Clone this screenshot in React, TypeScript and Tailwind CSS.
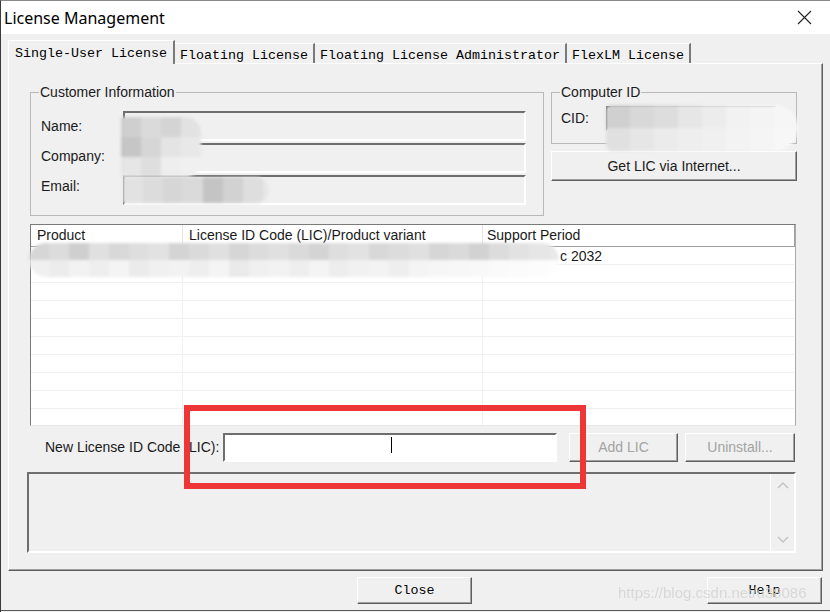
import React from 'react';

const ui = "font-['Liberation_Sans',Arial,sans-serif] text-[14px] text-[#1a1a1a]";
const mono = "font-['Liberation_Mono','Courier_New',monospace] text-[13.33px] text-black";
const sunken = 'border-2 border-t-[#6e6e6e] border-l-[#6e6e6e] border-r-white border-b-white';
const raised = 'border border-t-white border-l-white border-r-[#5f5f5f] border-b-[#5f5f5f] shadow-[inset_-1px_-1px_0_#a0a0a0]';

function Tab({ label, active }: { label: string; active?: boolean }) {
  if (active) {
    return (
      <div className={`h-[24px] -mb-px px-[6px] pt-[3px] border-l border-t border-white border-r-2 border-r-[#7a7a7a] bg-[#f0f0f0] ${mono}`}>
        {label}
      </div>
    );
  }
  return (
    <div className={`h-[20px] px-[5px] pt-[2px] border-r-2 border-r-[#7a7a7a] border-t border-t-white ${mono}`}>
      {label}
    </div>
  );
}

function Btn({ label, w, h, disabled, monoFont }: { label: string; w: string; h: string; disabled?: boolean; monoFont?: boolean }) {
  return (
    <div className={`${w} ${h} ${raised} flex items-center justify-center bg-[#f0f0f0] ${monoFont ? mono : ui} ${disabled ? 'text-[#a3a3a3]' : ''}`}>
      {label}
    </div>
  );
}

// pixelated blur patches over the private data
function Mosaic({ cls, cells, cellW, rows }: { cls: string; cells: string[]; cellW: number; rows: number }) {
  const cols = Math.ceil(cells.length / rows);
  return (
    <div className={`absolute overflow-hidden blur-[1.5px] grid ${cls}`}
      style={{ gridTemplateColumns: `repeat(${cols}, ${cellW}px)` }}>
      {cells.map((c, i) => <div key={i} style={{ backgroundColor: c }} />)}
    </div>
  );
}

export default function App() {
  const rows = Array.from({ length: 10 });
  return (
    <div className={`relative w-[830px] h-[612px] overflow-hidden bg-[#f0f0f0] border-l border-t border-l-[#3a3a3a] border-t-[#8a8a8a] flex flex-col ${ui}`}>
      {/* title bar */}
      <div className="h-[33px] bg-white flex items-center justify-between pl-[3px] pr-[18px]">
        <span className="font-['Noto_Sans',sans-serif] text-[16px] text-black">License Management</span>
        <svg width="15" height="15" viewBox="0 0 15 15">
          <path d="M1 1 L14 14 M14 1 L1 14" stroke="#222" strokeWidth="1.1" />
        </svg>
      </div>

      {/* tabs */}
      <div className="mt-[6px] h-[23px] pl-[7px] flex items-end relative z-10">
        <Tab label="Single-User License" active />
        <Tab label="Floating License" />
        <Tab label="Floating License Administrator" />
        <Tab label="FlexLM License" />
      </div>

      {/* tab page */}
      <div className={`ml-[7px] w-[815px] h-[508px] shrink-0 ${raised} pt-[21px] pl-[21px] flex flex-col`}>
        <div className="flex gap-[7px]">
          <fieldset className="w-[514px] h-[131px] border border-[#b9b9b9]">
            <legend className="ml-[8px] px-[1px] leading-[15px]">Customer Information</legend>
            <div className="flex">
              <div className="w-[92px] pl-[10px] mt-[18px] flex flex-col gap-[14px] leading-[16px]">
                <span>Name:</span>
                <span>Company:</span>
                <span>Email:</span>
              </div>
              <div className="mt-[11px] flex flex-col gap-[2px]">
                <div className={`w-[403px] h-[30px] ${sunken}`} />
                <div className={`w-[403px] h-[30px] ${sunken}`} />
                <div className={`w-[403px] h-[30px] ${sunken}`} />
              </div>
            </div>
          </fieldset>

          <div className="flex flex-col">
            <fieldset className="w-[246px] h-[59px] border border-[#b9b9b9]">
              <legend className="ml-[8px] px-[1px] leading-[15px]">Computer ID</legend>
              <div className="flex items-center mt-[6px]">
                <span className="w-[54px] pl-[9px]">CID:</span>
                <div className={`w-[170px] h-[25px] ${sunken}`} />
              </div>
            </fieldset>
            <div className="mt-[7px]">
              <Btn label="Get LIC via Internet..." w="w-[246px]" h="h-[30px]" />
            </div>
          </div>
        </div>

        {/* license list */}
        <div className="mt-[8px] w-[766px] h-[202px] border border-t-[#7a7a7a] border-l-[#7a7a7a] border-r-[#a9a9a9] border-b-[#e6e6e6] bg-white flex flex-col overflow-hidden">
          <div className="h-[22px] flex items-center border-b border-[#a0a0a0] border-r border-r-[#a0a0a0] shrink-0">
            <div className="w-[152px] pl-[6px] h-full flex items-center border-r border-[#e3e3e3]">Product</div>
            <div className="w-[300px] pl-[6px] h-full flex items-center border-r border-[#e3e3e3]">License ID Code (LIC)/Product variant</div>
            <div className="flex-1 pl-[4px]">Support Period</div>
          </div>
          {rows.map((_, i) => (
            <div key={i} className="h-[18px] flex border-b border-[#f0f0f0] shrink-0 mr-[1px]">
              <div className="w-[152px] border-r border-[#f0f0f0]" />
              <div className="w-[300px] border-r border-[#f0f0f0]" />
              <div className="flex-1 pl-[77px] leading-[18px]">{i === 0 ? 'c 2032' : ''}</div>
            </div>
          ))}
        </div>

        {/* new LIC */}
        <div className="mt-[7px] h-[29px] flex items-center">
          <span className="ml-[15px] w-[178px]">New License ID Code (LIC):</span>
          <div className={`w-[334px] h-[29px] bg-white ${sunken} relative`}>
            <div className="absolute left-[166px] top-[2px] w-px h-[16px] bg-black" />
          </div>
          <div className="ml-[12px]">
            <Btn label="Add LIC" w="w-[109px]" h="h-[29px]" disabled />
          </div>
          <div className="ml-[7px]">
            <Btn label="Uninstall..." w="w-[110px]" h="h-[29px]" disabled />
          </div>
        </div>

        {/* message area */}
        <div className={`mt-[10px] -ml-[3px] w-[769px] h-[81px] ${sunken} flex justify-end`}>
          <div className="w-[24px] h-full border-l border-white flex flex-col items-center justify-between py-[7px]">
            <svg width="12" height="8" viewBox="0 0 12 8"><path d="M1 7 L6 2 L11 7" stroke="#c4c4c4" strokeWidth="1.5" fill="none" /></svg>
            <svg width="12" height="8" viewBox="0 0 12 8"><path d="M1 1 L6 6 L11 1" stroke="#c4c4c4" strokeWidth="1.5" fill="none" /></svg>
          </div>
        </div>
      </div>

      {/* dialog buttons */}
      <div className="mt-[6px] h-[27px] flex">
        <div className="ml-[356px]">
          <Btn label="Close" w="w-[115px]" h="h-[27px]" monoFont />
        </div>
        <div className="ml-[235px]">
          <Btn label="Help" w="w-[115px]" h="h-[27px]" monoFont />
        </div>
      </div>
      <div className="mt-[6px] h-px bg-[#5a5a5a]" />

      {/* privacy blur patches */}
      <Mosaic cls="left-[120px] top-[116px] w-[80px] h-[60px] rounded-r-[16px]" cellW={20} rows={3}
        cells={['#cfcfcf', '#dadada', '#d4d4d4', '#e2e2e2', '#c6c6c6', '#d6d6d6', '#e4e4e4', '#e8e8e8', '#e6e6e6', '#dedede', '#eeeeee', '#f0f0f0']} />
      <Mosaic cls="left-[122px] top-[176px] w-[146px] h-[26px] rounded-r-full rounded-l-[10px]" cellW={20} rows={1}
        cells={['#e2e2e2', '#dcdcdc', '#d6d6d6', '#dadada', '#c4c4c4', '#d2d2d2', '#dedede', '#e6e6e6']} />
      <Mosaic cls="left-[605px] top-[104px] w-[192px] h-[46px] rounded-r-[24px] rounded-l-[6px]" cellW={24} rows={2}
        cells={['#d0d0d0', '#d8d8d8', '#dddddd', '#e6e6e6', '#ececec', '#f2f2f2', '#f4f4f4', '#f6f6f6', '#e0e0e0', '#e6e6e6', '#ebebeb', '#eeeeee', '#f0f0f0', '#f3f3f3', '#f5f5f5', '#f7f7f7']} />
      <Mosaic cls="left-[28px] top-[242px] w-[530px] h-[34px] rounded-full" cellW={20} rows={2}
        cells={[
          '#d6d6d6', '#dcdcdc', '#cfcfcf', '#e0e0e0', '#d8d8d8', '#dedede', '#e2e2e2', '#d4d4d4', '#dadada', '#e0e0e0', '#d6d6d6', '#dcdcdc', '#e0e0e0', '#dadada', '#d4d4d4', '#dedede', '#e2e2e2', '#d8d8d8', '#dcdcdc', '#e0e0e0', '#d6d6d6', '#dadada', '#d2d2d2', '#dcdcdc', '#e2e2e2', '#e6e6e6', '#e8e8e8',
          '#f0f0f0', '#ececec', '#f2f2f2', '#eeeeee', '#f4f4f4', '#ebebeb', '#f0f0f0', '#f2f2f2', '#eeeeee', '#f4f4f4', '#eaeaea', '#f0f0f0', '#f2f2f2', '#eeeeee', '#f4f4f4', '#ededed', '#f1f1f1', '#f3f3f3', '#eeeeee', '#f4f4f4', '#f6f6f6', '#f7f7f7', '#f8f8f8', '#fafafa', '#fbfbfb', '#fcfcfc', '#fdfdfd',
        ]} />

      {/* highlight frame */}
      <div className="absolute left-[183px] top-[404px] w-[402px] h-[84px] border-[6px] border-[#ef3636]" />

      {/* watermark */}
      <div className="absolute left-[617px] top-[581px] text-[15px] font-['Liberation_Sans',sans-serif] text-[#d2d2d2] opacity-80 pointer-events-none">
        https://blog.csdn.net/u38086
      </div>
    </div>
  );
}
